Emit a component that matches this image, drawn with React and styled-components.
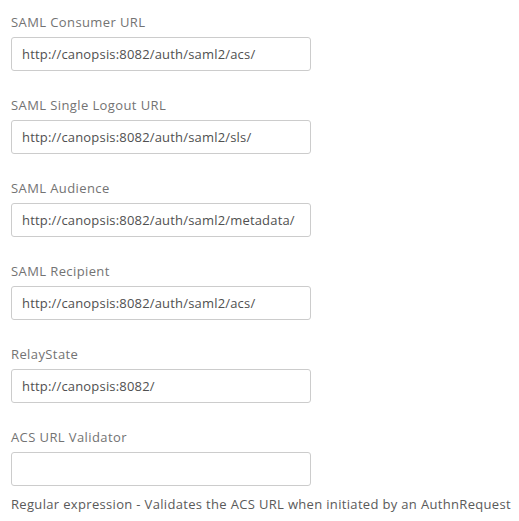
import React from 'react';
import styled, { createGlobalStyle } from 'styled-components';

const GlobalStyle = createGlobalStyle`
  body {
    margin: 0;
    background: #fff;
    font-family: "Open Sans", "Liberation Sans", sans-serif;
  }
`;

const Page = styled.div`
  padding: 14px 11px 0;
`;

const Field = styled.div`
  margin-bottom: 26px;

  &:last-of-type {
    margin-bottom: 10px;
  }
`;

const Label = styled.label`
  display: block;
  font-size: 13px;
  line-height: 16px;
  letter-spacing: 0.4px;
  color: #737373;
  margin-bottom: 7px;
`;

const Input = styled.input`
  display: block;
  box-sizing: border-box;
  width: 300px;
  height: 34px;
  padding: 0 10px;
  border: 1px solid #ccc;
  border-radius: 3px;
  font-family: inherit;
  font-size: 13px;
  letter-spacing: 0.18px;
  color: #505050;
  background: #fff;
  outline: none;
`;

const Help = styled.p`
  margin: 0;
  font-size: 13px;
  line-height: 16px;
  letter-spacing: 0.33px;
  color: #5a5a5a;
  white-space: nowrap;
`;

const fields = [
  { label: 'SAML Consumer URL', value: 'http://canopsis:8082/auth/saml2/acs/' },
  { label: 'SAML Single Logout URL', value: 'http://canopsis:8082/auth/saml2/sls/' },
  { label: 'SAML Audience', value: 'http://canopsis:8082/auth/saml2/metadata/' },
  { label: 'SAML Recipient', value: 'http://canopsis:8082/auth/saml2/acs/' },
  { label: 'RelayState', value: 'http://canopsis:8082/' },
  { label: 'ACS URL Validator', value: '' },
];

export default function App() {
  return (
    <Page>
      <GlobalStyle />
      {fields.map((f) => (
        <Field key={f.label}>
          <Label>{f.label}</Label>
          <Input type="text" defaultValue={f.value} />
        </Field>
      ))}
      <Help>Regular expression - Validates the ACS URL when initiated by an AuthnRequest</Help>
    </Page>
  );
}
